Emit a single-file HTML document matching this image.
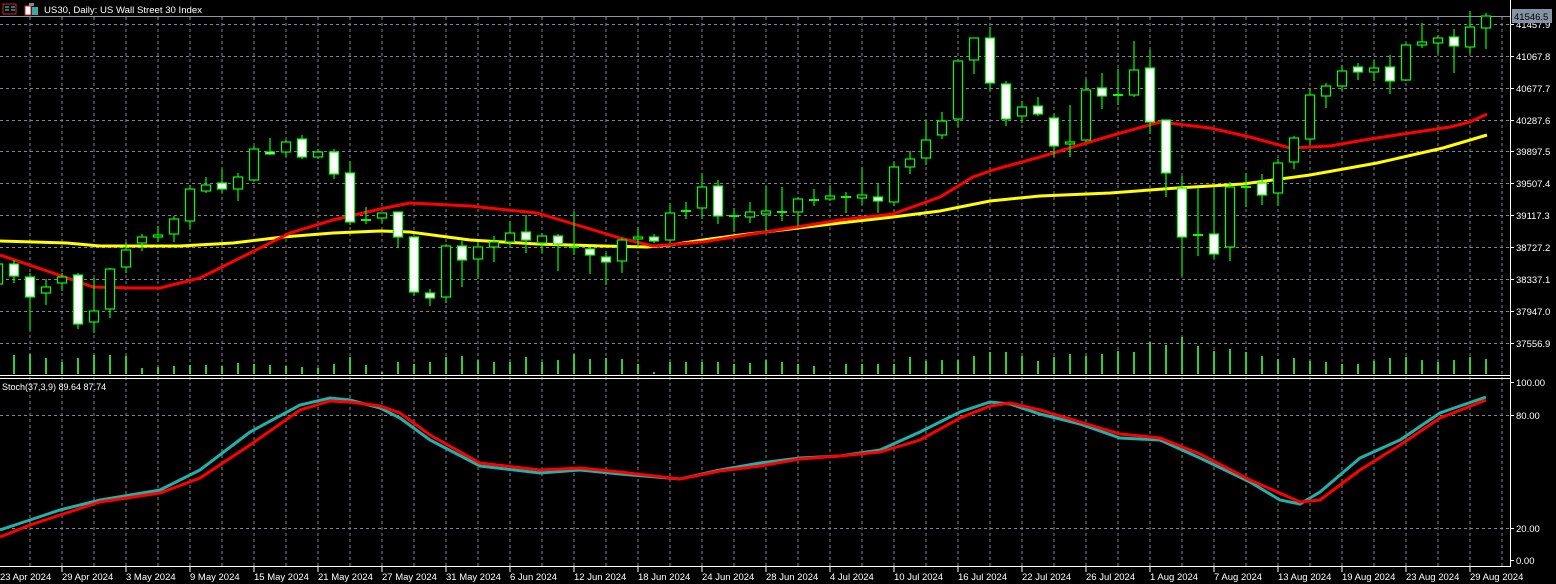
<!DOCTYPE html>
<html><head><meta charset="utf-8"><style>
html,body{margin:0;padding:0;background:#000;width:1556px;height:584px;overflow:hidden}
svg{display:block}
text{font-family:"Liberation Sans",sans-serif;font-size:9.5px;fill:#fff}
</style></head><body>
<svg width="1556" height="584" viewBox="0 0 1556 584" xmlns="http://www.w3.org/2000/svg">
<rect width="1556" height="584" fill="#000"/>
<g stroke="#7d8894" stroke-width="1" stroke-dasharray="3,3" shape-rendering="crispEdges">
<path d="M30 17V566M62 17V566M94 17V566M126 17V566M158 17V566M190 17V566M222 17V566M254 17V566M286 17V566M318 17V566M350 17V566M382 17V566M414 17V566M446 17V566M478 17V566M510 17V566M542 17V566M574 17V566M606 17V566M638 17V566M670 17V566M702 17V566M734 17V566M766 17V566M798 17V566M830 17V566M862 17V566M894 17V566M926 17V566M958 17V566M990 17V566M1022 17V566M1054 17V566M1086 17V566M1118 17V566M1150 17V566M1182 17V566M1214 17V566M1246 17V566M1278 17V566M1310 17V566M1342 17V566M1374 17V566M1406 17V566M1438 17V566M1470 17V566M1502 17V566"/>
<path d="M0 24.5H1510M0 56.5H1510M0 88.5H1510M0 120.5H1510M0 151.5H1510M0 183.5H1510M0 215.5H1510M0 247.5H1510M0 279.5H1510M0 311.5H1510M0 343.5H1510M0 415.5H1510M0 528.5H1510"/>
</g>
<path d="M0 16.5H1510" stroke="#8a96a2" stroke-width="1"/>
<path stroke="#32cd32" stroke-width="2" d="M14 374V355M30 374V354M46 374V358M62 374V362M78 374V358M94 374V355M110 374V355M126 374V356M142 374V368M158 374V367M174 374V366M190 374V365M206 374V365M222 374V366M238 374V363M254 374V364M270 374V365M286 374V366M302 374V367M318 374V368M334 374V364M350 374V357M366 374V365M382 374V372M398 374V362M414 374V364M430 374V362M446 374V357M462 374V356M478 374V360M494 374V362M510 374V362M526 374V357M542 374V362M558 374V360M574 374V354M590 374V359M606 374V358M622 374V359M638 374V364M654 374V372M670 374V362M686 374V362M702 374V362M718 374V362M734 374V364M750 374V363M766 374V360M782 374V362M798 374V364M814 374V366M830 374V373M846 374V364M862 374V364M878 374V364M894 374V364M910 374V357M926 374V361M942 374V360M958 374V360M974 374V356M990 374V352M1006 374V352M1022 374V356M1038 374V361M1054 374V357M1070 374V354M1086 374V356M1102 374V354M1118 374V351M1134 374V352M1150 374V342M1166 374V345M1182 374V337M1198 374V346M1214 374V351M1230 374V349M1246 374V352M1262 374V356M1278 374V359M1294 374V358M1310 374V361M1326 374V362M1342 374V364M1358 374V364M1374 374V361M1390 374V358M1406 374V357M1422 374V360M1438 374V362M1454 374V360M1470 374V357M1486 374V359"/>
<polyline fill="none" stroke="#ffff00" stroke-width="3" points="0,241 67,243 100,246 180,246 233,243 283,237 333,233 380,231 410,232 470,240 537,244 603,246 647,247 670,245 703,240 740,235 840,223 893,217 940,211 990,201 1040,196 1110,193 1177,188 1243,184 1310,175 1377,163 1443,148 1487,135"/>
<polyline fill="none" stroke="#ff0000" stroke-width="3" points="0,255 50,272 93,287 133,288 160,288 200,278 250,253 290,233 333,220 380,209 410,203 470,206 537,213 587,228 620,238 653,246 703,242 740,236 840,220 893,214 940,197 973,177 993,170 1040,157 1073,147 1110,136 1160,122 1210,128 1250,137 1290,148 1330,146 1370,139 1410,133 1450,127 1470,122 1487,114"/>
<path stroke="#00ff00" stroke-width="1.2" fill="none" d="M-2 258V288M14 260V283M30 273V331M46 279V305M62 273V291M78 273V329M94 278V333M110 268V318M126 242V273M142 234V251M158 226V242M174 216V242M190 185V229M206 177V193M222 169V193M238 173V201M254 146V181M270 138V155M286 140V157M302 135V159M318 149V159M334 149V179M350 161V225M366 207V224M382 213V223M398 212V248M414 237V296M430 289V306M446 244V303M462 241V287M478 242V279M494 236V262M510 221V247M526 215V253M542 233V253M558 234V271M574 212V255M590 247V274M606 253V285M622 238V273M638 227V247M654 234V243M670 203V243M686 202V219M702 174V219M718 180V224M734 208V232M750 202V223M766 186V231M782 187V221M798 197V226M814 189V206M830 186V201M846 192V213M862 167V205M878 183V213M894 162V206M910 151V174M926 120V165M942 112V139M958 59V127M974 38V74M990 27V91M1006 81V126M1022 101V123M1038 97V116M1054 114V157M1070 105V157M1086 79V142M1102 73V109M1118 69V105M1134 41V97M1150 50V134M1166 120V197M1182 176V276M1198 188V256M1214 188V259M1230 182V261M1246 173V207M1262 174V205M1278 159V206M1294 136V169M1310 89V145M1326 83V108M1342 65V91M1358 63V80M1374 60V81M1390 55V94M1406 43V81M1422 23V48M1438 35V54M1454 29V73M1470 11V54M1486 13V49"/>
<path stroke="#00ff00" stroke-width="2" d="M361 220H371M569 247H579M681 211H691M729 216H739M777 212H787M809 200H819M841 197H851M1113 95H1123M1193 235H1203M1241 187H1251"/>
<g fill="#000" stroke="#00ff00" stroke-width="1.2">
<rect x="-6.5" y="264" width="9" height="20"/><rect x="41.5" y="287" width="9" height="6"/><rect x="57.5" y="277" width="9" height="6"/><rect x="89.5" y="311" width="9" height="11"/><rect x="105.5" y="269" width="9" height="40"/><rect x="121.5" y="250" width="9" height="17"/><rect x="137.5" y="237" width="9" height="6"/><rect x="153.5" y="235" width="9" height="2"/><rect x="169.5" y="219" width="9" height="15"/><rect x="185.5" y="189" width="9" height="32"/><rect x="201.5" y="185" width="9" height="6"/><rect x="233.5" y="177" width="9" height="12"/><rect x="249.5" y="149" width="9" height="31"/><rect x="281.5" y="142" width="9" height="10"/><rect x="313.5" y="152" width="9" height="5"/><rect x="377.5" y="213" width="9" height="5"/><rect x="441.5" y="246" width="9" height="51"/><rect x="473.5" y="247" width="9" height="12"/><rect x="489.5" y="242" width="9" height="5"/><rect x="505.5" y="233" width="9" height="9"/><rect x="537.5" y="236" width="9" height="7"/><rect x="617.5" y="240" width="9" height="21"/><rect x="633.5" y="237" width="9" height="2"/><rect x="665.5" y="213" width="9" height="27"/><rect x="697.5" y="187" width="9" height="21"/><rect x="745.5" y="212" width="9" height="5"/><rect x="761.5" y="211" width="9" height="3"/><rect x="793.5" y="199" width="9" height="13"/><rect x="825.5" y="196" width="9" height="3"/><rect x="857.5" y="195" width="9" height="3"/><rect x="889.5" y="167" width="9" height="35"/><rect x="905.5" y="159" width="9" height="8"/><rect x="921.5" y="140" width="9" height="18"/><rect x="937.5" y="121" width="9" height="14"/><rect x="953.5" y="61" width="9" height="58"/><rect x="969.5" y="38" width="9" height="22"/><rect x="1017.5" y="107" width="9" height="9"/><rect x="1065.5" y="142" width="9" height="2"/><rect x="1081.5" y="90" width="9" height="50"/><rect x="1129.5" y="70" width="9" height="25"/><rect x="1225.5" y="187" width="9" height="60"/><rect x="1273.5" y="163" width="9" height="30"/><rect x="1289.5" y="138" width="9" height="24"/><rect x="1305.5" y="95" width="9" height="44"/><rect x="1321.5" y="86" width="9" height="10"/><rect x="1337.5" y="71" width="9" height="15"/><rect x="1369.5" y="68" width="9" height="4"/><rect x="1401.5" y="45" width="9" height="35"/><rect x="1417.5" y="42" width="9" height="3"/><rect x="1433.5" y="38" width="9" height="5"/><rect x="1465.5" y="27" width="9" height="20"/><rect x="1481.5" y="16" width="9" height="12"/>
</g>
<g fill="#fff" stroke="#00ff00" stroke-width="1.2">
<rect x="9.5" y="264" width="9" height="12"/><rect x="25.5" y="277" width="9" height="20"/><rect x="73.5" y="275" width="9" height="49"/><rect x="217.5" y="183" width="9" height="6"/><rect x="265.5" y="152" width="9" height="2"/><rect x="297.5" y="139" width="9" height="18"/><rect x="329.5" y="152" width="9" height="22"/><rect x="345.5" y="173" width="9" height="49"/><rect x="393.5" y="212" width="9" height="25"/><rect x="409.5" y="237" width="9" height="55"/><rect x="425.5" y="293" width="9" height="5"/><rect x="457.5" y="246" width="9" height="14"/><rect x="521.5" y="232" width="9" height="8"/><rect x="553.5" y="236" width="9" height="8"/><rect x="585.5" y="249" width="9" height="6"/><rect x="601.5" y="257" width="9" height="5"/><rect x="649.5" y="237" width="9" height="4"/><rect x="713.5" y="186" width="9" height="30"/><rect x="873.5" y="197" width="9" height="4"/><rect x="985.5" y="38" width="9" height="45"/><rect x="1001.5" y="84" width="9" height="35"/><rect x="1033.5" y="106" width="9" height="8"/><rect x="1049.5" y="118" width="9" height="28"/><rect x="1097.5" y="88" width="9" height="8"/><rect x="1145.5" y="68" width="9" height="54"/><rect x="1161.5" y="120" width="9" height="53"/><rect x="1177.5" y="188" width="9" height="49"/><rect x="1209.5" y="234" width="9" height="20"/><rect x="1257.5" y="183" width="9" height="12"/><rect x="1353.5" y="67" width="9" height="5"/><rect x="1385.5" y="67" width="9" height="14"/><rect x="1449.5" y="37" width="9" height="9"/>
</g>
<path d="M0 375.5H1510M0 378.5H1510M0 566.5H1510M1510.5 0V567" stroke="#fff" stroke-width="1"/>
<polyline fill="none" stroke="#20b2aa" stroke-width="3" points="0,530 30,520 60,510 100,500 160,490 200,470 250,432 300,405 330,398 350,400 380,408 400,418 430,440 480,466 540,473 580,470 620,474 680,479 720,470 760,463 800,458 840,456 880,450 920,432 960,412 990,402 1010,404 1040,414 1080,424 1120,438 1160,440 1200,458 1250,482 1280,500 1300,504 1320,492 1360,458 1400,440 1440,413 1486,397"/>
<polyline fill="none" stroke="#ff0000" stroke-width="3" points="0,537 30,525 60,515 100,502 160,493 200,478 250,445 300,410 330,401 350,402 380,406 400,413 430,435 480,463 540,470 580,468 620,472 680,479 720,471 760,466 800,459 840,456 880,452 920,440 960,418 990,406 1010,403 1040,410 1080,422 1120,434 1160,438 1200,454 1250,480 1300,502 1320,500 1360,470 1400,445 1440,418 1486,400"/>
<text x="2" y="390" style="font-size:9px">Stoch(37,3,9) 89.64 87.74</text>
<rect x="3" y="4" width="13" height="10" fill="none" stroke="#e02020" stroke-width="1"/>
<path d="M5 7H9M5 10H9M11 7H15M11 10H15" stroke="#30a0a0" stroke-width="1.5"/>
<rect x="25" y="6" width="6" height="9" fill="#fff" stroke="#e02020"/>
<rect x="29" y="3" width="5" height="3" fill="#888"/>
<rect x="32" y="7" width="6" height="8" fill="#3aa8a8"/>
<text x="44" y="13" style="font-size:9.6px">US30, Daily:  US Wall Street 30 Index</text>
<g stroke="#fff" stroke-width="1"><path d="M1510 24.5H1514M1510 56.5H1514M1510 88.5H1514M1510 120.5H1514M1510 151.5H1514M1510 183.5H1514M1510 215.5H1514M1510 247.5H1514M1510 279.5H1514M1510 311.5H1514M1510 343.5H1514M1510 382.5H1514M1510 415.5H1514M1510 528.5H1514M1510 560.5H1514"/></g>
<g>
<text x="1516" y="28">41457.9</text><text x="1516" y="60">41067.8</text><text x="1516" y="92">40677.7</text><text x="1516" y="124">40287.6</text><text x="1516" y="155">39897.5</text><text x="1516" y="187">39507.4</text><text x="1516" y="219">39117.3</text><text x="1516" y="251">38727.2</text><text x="1516" y="283">38337.1</text><text x="1516" y="315">37947.0</text><text x="1516" y="347">37556.9</text>
<text x="1516" y="386">100.00</text><text x="1516" y="419">80.00</text><text x="1516" y="532">20.00</text><text x="1516" y="564">0.00</text>
</g>
<rect x="1512" y="9" width="40" height="14" fill="#8494a4"/>
<text x="1514" y="20" style="fill:#000">41546.5</text>
<path stroke="#fff" d="M62 567V572M126 567V572M190 567V572M254 567V572M318 567V572M382 567V572M446 567V572M510 567V572M574 567V572M638 567V572M702 567V572M766 567V572M830 567V572M894 567V572M958 567V572M1022 567V572M1086 567V572M1150 567V572M1214 567V572M1278 567V572M1342 567V572M1406 567V572M1470 567V572"/>
<g>
<text x="0" y="580">23 Apr 2024</text><text x="62" y="580">29 Apr 2024</text><text x="126" y="580">3 May 2024</text><text x="190" y="580">9 May 2024</text><text x="254" y="580">15 May 2024</text><text x="318" y="580">21 May 2024</text><text x="382" y="580">27 May 2024</text><text x="446" y="580">31 May 2024</text><text x="510" y="580">6 Jun 2024</text><text x="574" y="580">12 Jun 2024</text><text x="638" y="580">18 Jun 2024</text><text x="702" y="580">24 Jun 2024</text><text x="766" y="580">28 Jun 2024</text><text x="830" y="580">4 Jul 2024</text><text x="894" y="580">10 Jul 2024</text><text x="958" y="580">16 Jul 2024</text><text x="1022" y="580">22 Jul 2024</text><text x="1086" y="580">26 Jul 2024</text><text x="1150" y="580">1 Aug 2024</text><text x="1214" y="580">7 Aug 2024</text><text x="1278" y="580">13 Aug 2024</text><text x="1342" y="580">19 Aug 2024</text><text x="1406" y="580">23 Aug 2024</text><text x="1470" y="580">29 Aug 2024</text>
</g>
</svg>
</body></html>
